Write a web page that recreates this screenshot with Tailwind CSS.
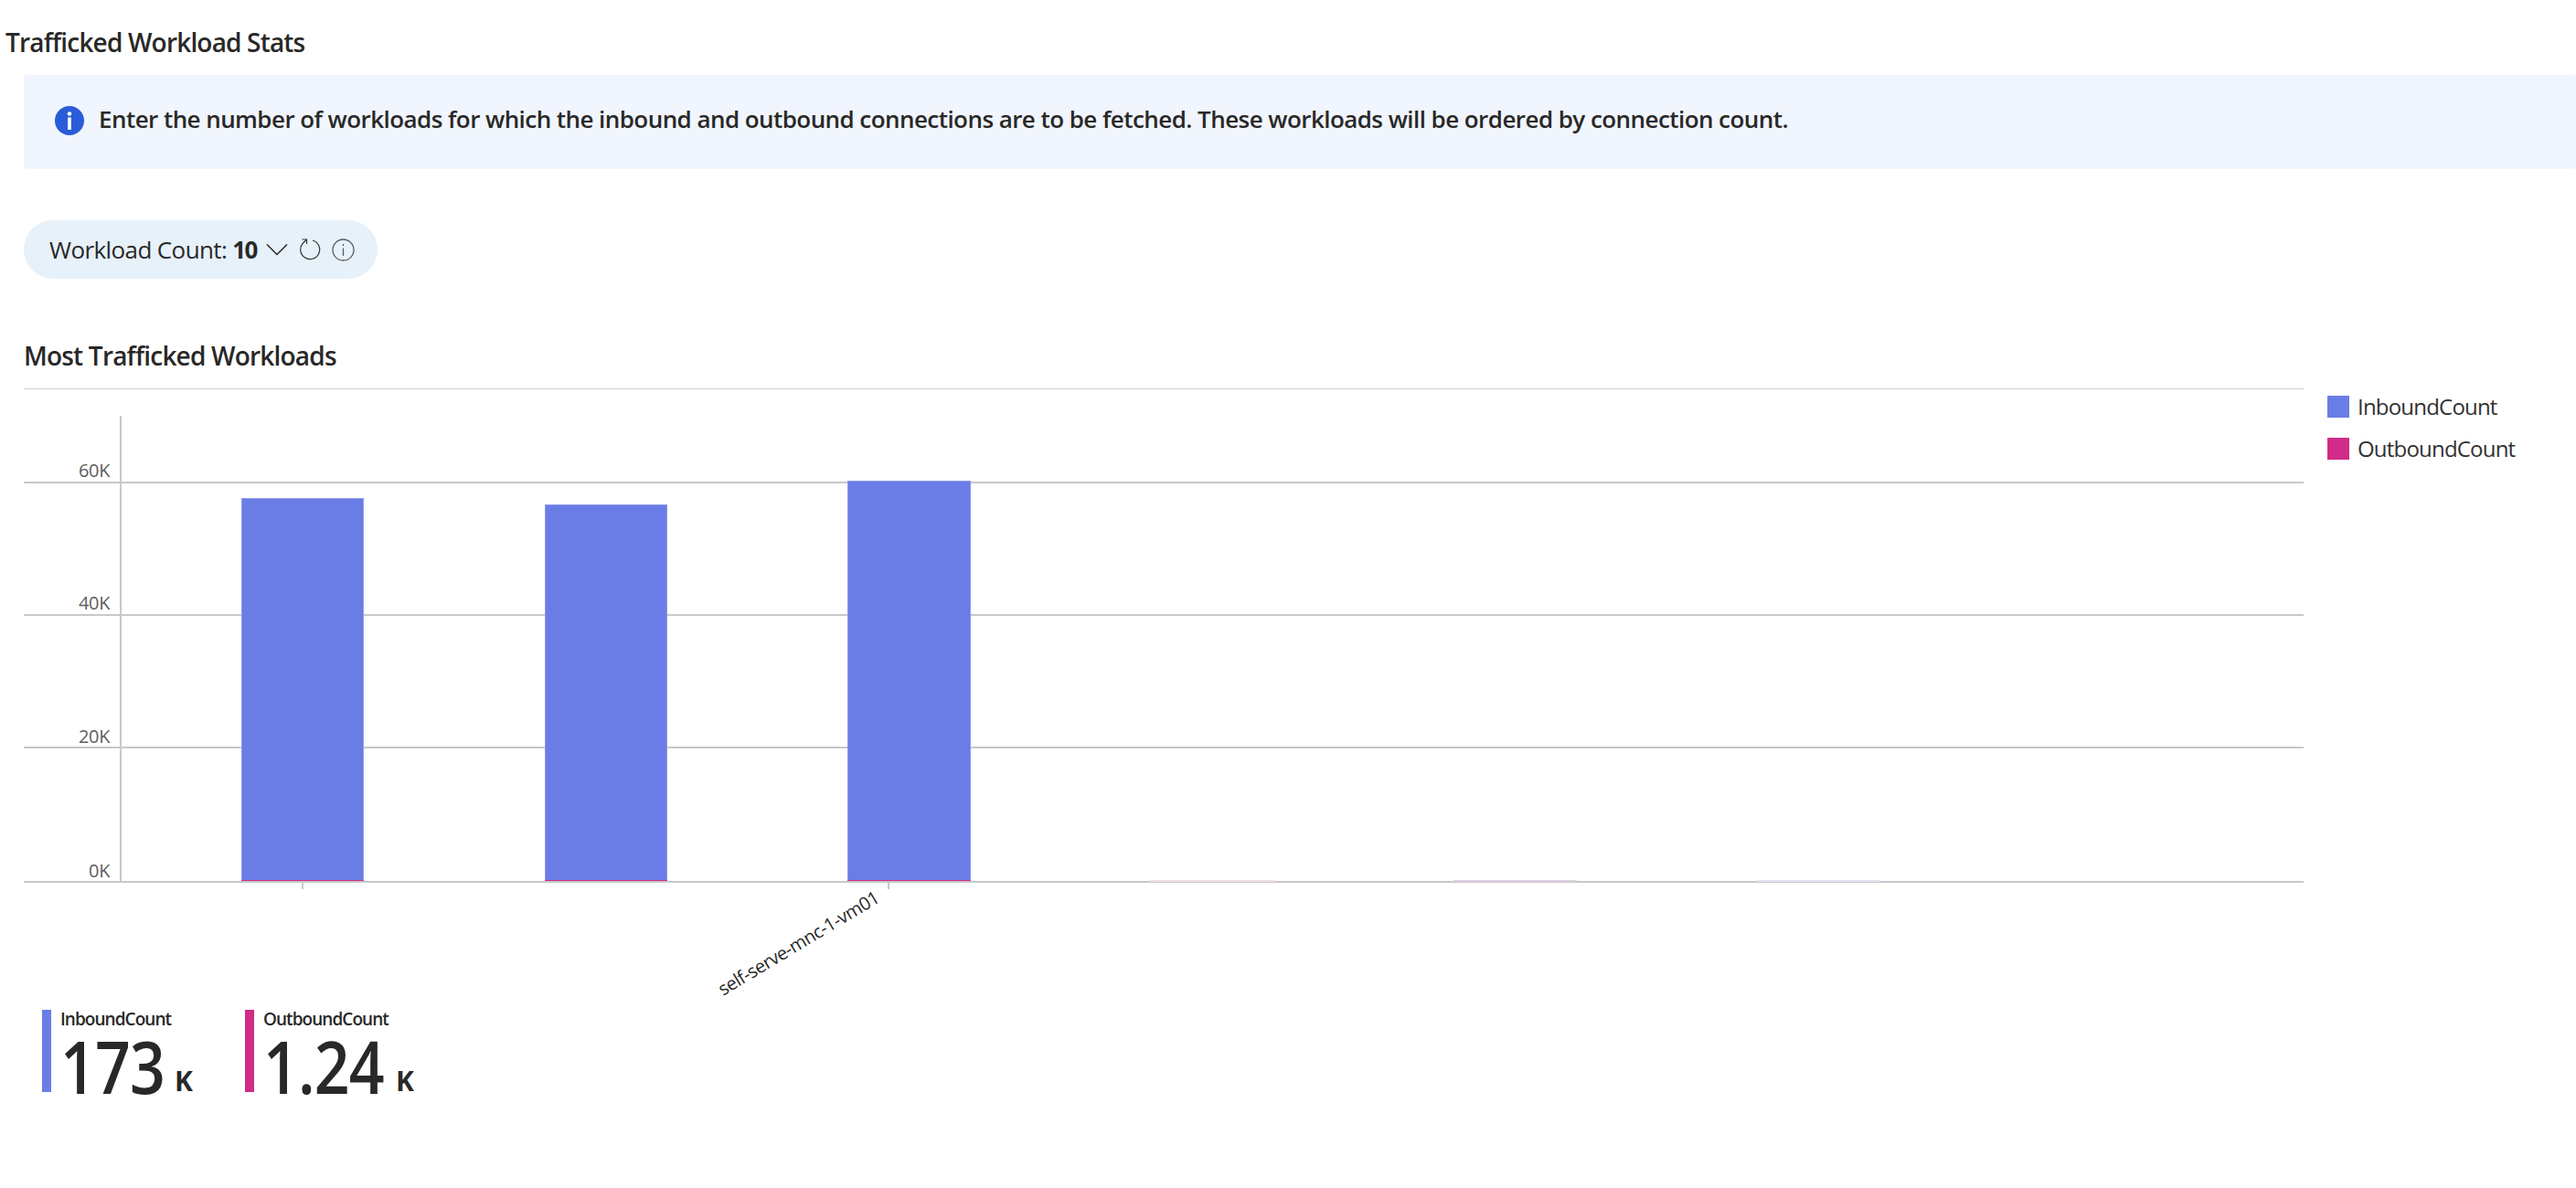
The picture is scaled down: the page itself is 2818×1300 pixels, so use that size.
<!DOCTYPE html>
<html lang="en">
<head>
  <meta charset="UTF-8" />
  <title>Trafficked Workload Stats</title>
  <script src="https://cdn.jsdelivr.net/npm/@tailwindcss/browser@4"></script>
</head>
<body class="bg-white text-[#292827] font-['Open_Sans',sans-serif] w-[2818px] h-[1300px] overflow-hidden">

  <!-- header -->
  <h1 class="pl-[6px] pt-[27px] text-[28px] leading-[38px] font-semibold tracking-[-0.82px]">Trafficked Workload Stats</h1>

  <!-- info banner -->
  <div class="ml-[26px] mt-[17px] h-[103px] flex items-center gap-[16px] pl-[34px] pb-[3px] bg-[#f0f5fe] rounded-[3px]">
    <svg class="w-[32px] h-[32px] shrink-0" viewBox="0 0 32 32">
      <circle cx="16" cy="16" r="16" fill="#2a5cd9" />
      <circle cx="16" cy="8.5" r="2.3" fill="#fff" />
      <rect x="14.2" y="12.5" width="3.6" height="13.5" fill="#fff" />
    </svg>
    <p class="mb-[4px] text-[26px] leading-[36px] font-semibold tracking-[-0.56px]">Enter the number of workloads for which the inbound and outbound connections are to be fetched. These workloads will be ordered by connection count.</p>
  </div>

  <!-- workload count pill -->
  <div class="ml-[26px] mt-[56px] w-[387px] h-[64px] flex items-center pl-[28px] bg-[#e6f1fa] rounded-full text-[26px]">
    <div class="w-[225px] shrink-0 flex whitespace-nowrap">
      <span class="tracking-[-0.6px]">Workload Count:</span>
      <span class="ml-[6px] font-bold tracking-[-1.6px]">10</span>
    </div>
    <svg class="ml-[12px] w-[24px] h-[14px]" viewBox="0 0 24 14" fill="none" stroke="#292827" stroke-width="1.5"><path d="M1 1.5 L12 12.5 L23 1.5" /></svg>
    <svg class="ml-[12px] w-[24px] h-[26px]" viewBox="0 0 24 26" fill="none" stroke="#333231" stroke-width="1.2"><path d="M15 3 A10.5 10.5 0 1 1 4.5 6 L8.5 2" /><path d="M3.5 2 H8.5 V7" /></svg>
    <svg class="ml-[12px] w-[25px] h-[25px]" viewBox="0 0 25 25" fill="none" stroke="#5c5a58" stroke-width="1.3"><circle cx="12.5" cy="12.5" r="11.5" /><path d="M12.5 10.5 V19" /><path d="M12.5 6 V8" /></svg>
  </div>

  <!-- chart title -->
  <h2 class="ml-[26px] mt-[65px] text-[28px] leading-[38px] font-semibold tracking-[-0.8px]">Most Trafficked Workloads</h2>

  <!-- chart + legend -->
  <div class="mt-[17px] relative">
    <div class="ml-[26px] w-[2494px] h-px bg-[#cfcfcf]"></div>
    <div class="absolute left-[2546px] top-[8px] flex flex-col gap-[22px] text-[24px] leading-[24px] text-[#323130]">
      <div class="flex items-center gap-[9px]"><span class="w-[24px] h-[24px] bg-[#6a7de6]"></span><span class="tracking-[-0.8px]">InboundCount</span></div>
      <div class="flex items-center gap-[9px]"><span class="w-[24px] h-[24px] bg-[#d02c88]"></span><span class="tracking-[-0.8px]">OutboundCount</span></div>
    </div>
    <svg class="block" width="2520" height="680" viewBox="0 426 2520 680">
      <g fill="none" stroke="#c8c8c8" stroke-width="2">
        <path d="M26 528H2520M26 673H2520M26 818H2520M26 965H2520" />
        <path d="M132 455V965" />
        <path d="M331 966V973M972 966V973" />
      </g>
      <g fill="#605e5c" font-size="20" text-anchor="end" letter-spacing="-0.4">
        <text x="120" y="522">60K</text>
        <text x="120" y="667">40K</text>
        <text x="120" y="813">20K</text>
        <text x="120" y="960">0K</text>
      </g>
      <g fill="#6a7de6" stroke="#8b99ec" stroke-width="1">
        <rect x="264.5" y="545.5" width="133" height="418" />
        <rect x="596.5" y="552.5" width="133" height="411" />
        <rect x="927.5" y="526.5" width="134" height="437" />
      </g>
      <g fill="#d02c88">
        <rect x="264" y="963" width="134" height="1" />
        <rect x="596" y="963" width="134" height="1" />
        <rect x="927" y="963" width="135" height="1" />
      </g>
      <!-- empty series, only a sliver shows on the axis -->
      <rect x="1258" y="963" width="136" height="2" fill="#f0e0e6" />
      <rect x="1590" y="963" width="135" height="2" fill="#dcd0e0" />
      <rect x="1922" y="963" width="135" height="2" fill="#e4e4f4" />
      <text x="791" y="1090" font-size="20" fill="#292827" letter-spacing="-0.5" transform="rotate(-31 791 1090)">self-serve-mnc-1-vm01</text>
    </svg>
  </div>

  <!-- totals -->
  <div class="ml-[46px] mt-[-1px] flex">
    <div class="w-[222px] flex gap-[10px] h-[90px]">
      <div class="w-[10px] h-[90px] bg-[#6a7de6]"></div>
      <div>
        <div class="-mt-[2px] text-[19px] leading-[24px] font-semibold tracking-[-0.95px]">InboundCount</div>
        <div class="mt-[6px] flex items-baseline h-[66px] leading-[66px]">
          <span class="w-[125px] text-[80px] font-semibold tracking-[-1px] scale-x-[0.85] origin-left">173</span>
          <span class="text-[30px] font-bold -translate-y-[3px]">K</span>
        </div>
      </div>
    </div>
    <div class="flex gap-[10px] h-[90px]">
      <div class="w-[10px] h-[90px] bg-[#d02c88]"></div>
      <div>
        <div class="-mt-[2px] text-[19px] leading-[24px] font-semibold tracking-[-0.95px]">OutboundCount</div>
        <div class="mt-[6px] flex items-baseline h-[66px] leading-[66px]">
          <span class="w-[145px] text-[80px] font-semibold tracking-[-1px] scale-x-[0.85] origin-left">1.24</span>
          <span class="text-[30px] font-bold -translate-y-[3px]">K</span>
        </div>
      </div>
    </div>
  </div>
</body>
</html>
